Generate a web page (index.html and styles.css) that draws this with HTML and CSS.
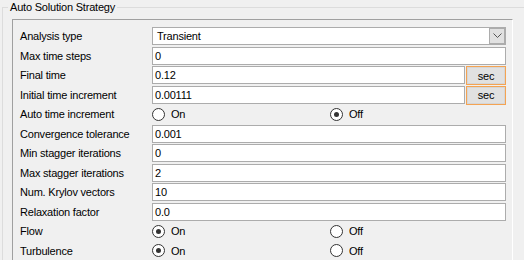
FILE: index.html
```html
<!DOCTYPE html>
<html>
<head>
<meta charset="utf-8">
<link rel="stylesheet" href="styles.css">
</head>
<body>
<div class="group">
  <div class="group-title">Auto Solution Strategy</div>
  <div class="panel">
    <div class="form">
      <div class="label">Analysis type</div>
      <div class="combo"><span class="combo-text">Transient</span><span class="combo-btn"><svg width="9" height="6" viewBox="0 0 9 6"><path d="M0.5 0.5 L4.5 4.5 L8.5 0.5" fill="none" stroke="#555" stroke-width="1"/></svg></span></div>

      <div class="label">Max time steps</div>
      <div class="field">0</div>

      <div class="label">Final time</div>
      <div class="with-unit"><div class="field">0.12</div><div class="unit">sec</div></div>

      <div class="label">Initial time increment</div>
      <div class="with-unit"><div class="field">0.00111</div><div class="unit">sec</div></div>

      <div class="label">Auto time increment</div>
      <div class="radios">
        <div class="opt"><span class="radio"></span>On</div>
        <div class="opt"><span class="radio checked"></span>Off</div>
      </div>

      <div class="label">Convergence tolerance</div>
      <div class="field">0.001</div>

      <div class="label">Min stagger iterations</div>
      <div class="field">0</div>

      <div class="label">Max stagger iterations</div>
      <div class="field">2</div>

      <div class="label">Num. Krylov vectors</div>
      <div class="field">10</div>

      <div class="label">Relaxation factor</div>
      <div class="field">0.0</div>

      <div class="label">Flow</div>
      <div class="radios">
        <div class="opt"><span class="radio checked"></span>On</div>
        <div class="opt"><span class="radio"></span>Off</div>
      </div>

      <div class="label">Turbulence</div>
      <div class="radios">
        <div class="opt"><span class="radio checked"></span>On</div>
        <div class="opt"><span class="radio"></span>Off</div>
      </div>
    </div>
  </div>
</div>
</body>
</html>
```
FILE: styles.css
```css
html, body {
  margin: 0;
  padding: 0;
  background: #f0f0f0;
  overflow: hidden;
}
body {
  font-family: "Liberation Sans", Arial, sans-serif;
  font-size: 11px;
  letter-spacing: -0.2px;
  color: #000;
  width: 524px;
  height: 260px;
}
.group {
  position: relative;
  margin: 7px 0 0 2px;
  border: 1px solid #dcdcdc;
  border-bottom: none;
  border-right: none;
  width: 522px;
  height: 253px;
  box-sizing: border-box;
}
.group-title {
  position: absolute;
  left: 5px;
  top: -8px;
  padding: 0 2px;
  background: #f0f0f0;
  line-height: 14px;
}
.panel {
  margin: 11px 0 0 9px;
  width: 501px;
  height: 241px;
  border-top: 1px solid #a0a0a0;
  border-left: 1px solid #a0a0a0;
  border-right: 1px solid #ffffff;
  padding: 7px 6px 0 7px;
  box-sizing: border-box;
}
.form {
  display: grid;
  grid-template-columns: 132px 1fr;
  grid-auto-rows: 19.5px;
}
.label {
  display: flex;
  align-items: center;
  height: 18px;
}
.field {
  height: 18px;
  box-sizing: border-box;
  border: 1px solid #acacac;
  background: #fff;
  padding: 0 2px;
  line-height: 16px;
}
.combo {
  height: 18px;
  box-sizing: border-box;
  border: 1px solid #acacac;
  background: #fff;
  display: flex;
  align-items: center;
  justify-content: space-between;
  padding-left: 4px;
}
.combo-btn {
  width: 16px;
  height: 16px;
  box-sizing: border-box;
  background: #e1e1e1;
  border: 1px solid #acacac;
  display: flex;
  align-items: center;
  justify-content: center;
}
.with-unit {
  display: flex;
  gap: 1px;
}
.with-unit .field {
  flex: 1;
}
.unit {
  width: 40px;
  height: 19px;
  box-sizing: border-box;
  border: 1px solid #f4a352;
  box-shadow: inset 0 0 0 1px #d6d6d6;
  background: #e1e1e1;
  display: flex;
  align-items: center;
  justify-content: center;
}
.radios {
  display: grid;
  grid-template-columns: 178px 1fr;
  height: 18px;
}
.opt {
  display: flex;
  align-items: center;
  gap: 6px;
}
.radio {
  width: 13px;
  height: 13px;
  box-sizing: border-box;
  border: 1px solid #333;
  border-radius: 50%;
  background: #fff;
  display: flex;
  align-items: center;
  justify-content: center;
}
.radio.checked::after {
  content: "";
  width: 5px;
  height: 5px;
  border-radius: 50%;
  background: #333;
}
```
